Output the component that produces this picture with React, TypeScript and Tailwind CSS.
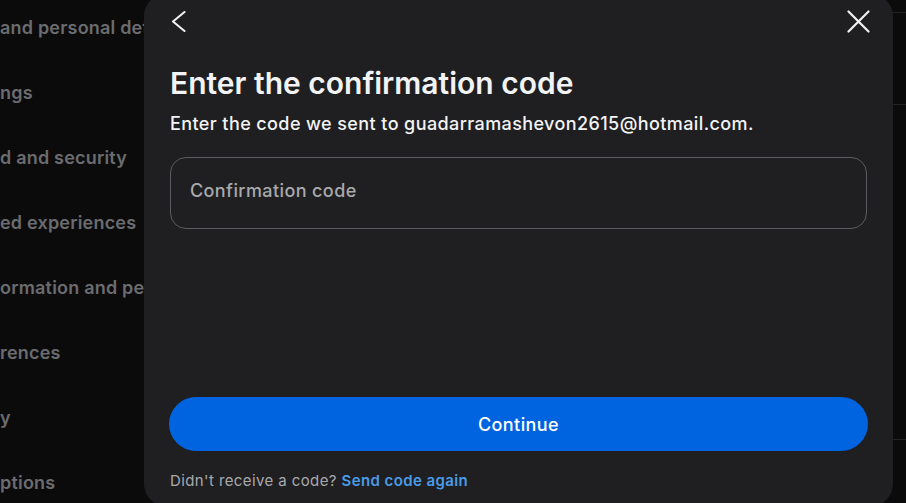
export default function App() {
  const items = [
    "and personal details",
    "ngs",
    "d and security",
    "ed experiences",
    "ormation and permissions",
    "rences",
    "y",
    "ptions",
  ];

  return (
    <div
      className="relative w-[906px] h-[503px] overflow-hidden bg-[#0b0b0c] flex"
      style={{ fontFamily: "Inter, 'Noto Sans', sans-serif" }}
    >
      <div className="w-[300px] shrink-0 flex flex-col pt-[16px]">
        {items.map((t) => (
          <div
            key={t}
            className="h-[65px] shrink-0 leading-[24px] text-[18px] font-semibold tracking-[0.2px] text-[#6b6c6f] whitespace-nowrap"
          >
            {t}
          </div>
        ))}
      </div>
      <div className="flex-1 flex flex-col">
        <div className="h-[13px] shrink-0 border-b border-[#222326]" />
        <div className="h-[92px] shrink-0 border-b border-[#222326]" />
        <div className="h-[335px] shrink-0 border-b border-[#222326]" />
      </div>

      <div className="absolute left-[144px] top-[-6px] w-[749px] h-[512px] rounded-[22px] bg-[#1f1f21] flex flex-col px-[25px]">
        <div className="mt-[12px] h-[30px] flex items-center justify-between">
          <button className="ml-[2px] text-white">
            <svg width="15" height="21" viewBox="0 0 15 21" fill="none">
              <polyline
                points="13.5,1 2,10.5 13.5,20"
                stroke="#f2f2f2"
                strokeWidth="2"
                strokeLinecap="round"
                strokeLinejoin="round"
              />
            </svg>
          </button>
          <button className="mr-[-2px]">
            <svg width="23" height="23" viewBox="0 0 23 23" fill="none">
              <path
                d="M1.5 1.5 L21.5 21.5 M21.5 1.5 L1.5 21.5"
                stroke="#f2f2f2"
                strokeWidth="2.2"
                strokeLinecap="round"
              />
            </svg>
          </button>
        </div>

        <h1 className="mt-[29px] ml-[1px] text-[30px] leading-[36px] font-semibold text-[#f2f3f5]">
          Enter the confirmation code
        </h1>
        <p className="mt-[11px] ml-[1px] text-[18px] leading-[24px] font-medium tracking-[0.4px] text-[#f2f3f5]">
          Enter the code we sent to guadarramashevon2615@hotmail.com.
        </p>

        <div className="mt-[21px] mx-[1px] h-[72px] shrink-0 rounded-[16px] border border-[#5b5c5f] bg-[#1f1f21] flex items-center px-[19px] pb-[6px]">
          <span className="text-[18px] font-medium tracking-[0.4px] text-[#a8a9ad]">
            Confirmation code
          </span>
        </div>

        <button className="mt-auto h-[54px] shrink-0 w-full rounded-full bg-[#0064e0] text-white text-[18px] font-medium tracking-[0.4px]">
          Continue
        </button>

        <div className="mt-[20px] mb-[15px] ml-[1px] h-[20px] leading-[20px] text-[15px] tracking-[0.4px] text-[#a8a9ad]">
          Didn't receive a code?{" "}
          <span className="font-semibold text-[#4a9ce8]">Send code again</span>
        </div>
      </div>
    </div>
  );
}
